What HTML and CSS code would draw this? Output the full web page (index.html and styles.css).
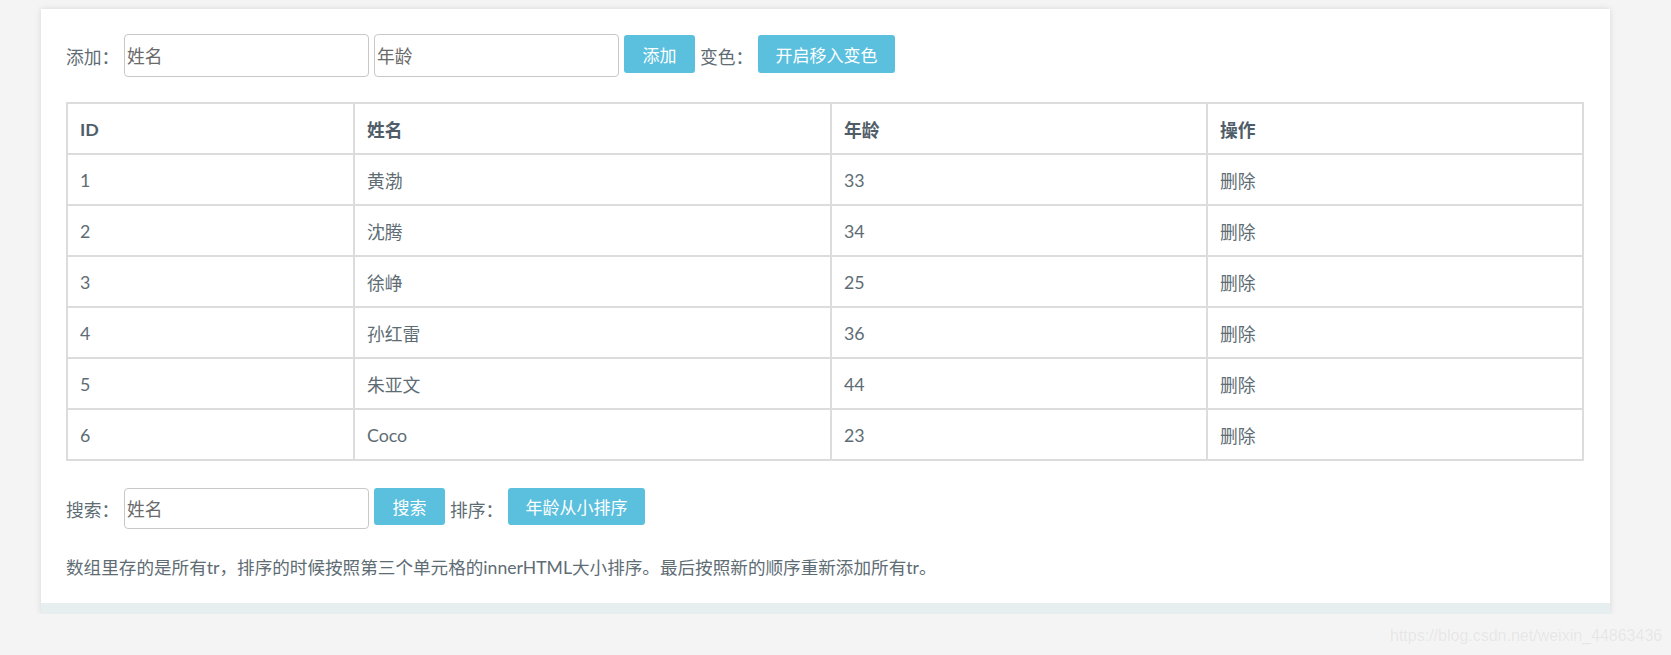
FILE: index.html
```html
<!DOCTYPE html>
<html lang="zh-CN">
<head>
  <meta charset="UTF-8" />
  <title>表格排序</title>
  <link rel="stylesheet" href="styles.css">
</head>
<body>

  <div class="panel">
    <div class="panel-body">

      <!-- 添加 / 变色 -->
      <div class="toolbar">
        <span class="label">添加：</span>
        <input class="field" type="text" placeholder="姓名" />
        <input class="field" type="text" placeholder="年龄" />
        <button class="btn">添加</button>
        <span class="label">变色：</span>
        <button class="btn btn-wide">开启移入变色</button>
      </div>

      <!-- 数据表 -->
      <table class="grid">
        <thead>
          <tr><th class="col-id">ID</th><th class="col-name">姓名</th><th class="col-age">年龄</th><th>操作</th></tr>
        </thead>
        <tbody>
          <tr><td>1</td><td>黄渤</td><td>33</td><td>删除</td></tr>
          <tr><td>2</td><td>沈腾</td><td>34</td><td>删除</td></tr>
          <tr><td>3</td><td>徐峥</td><td>25</td><td>删除</td></tr>
          <tr><td>4</td><td>孙红雷</td><td>36</td><td>删除</td></tr>
          <tr><td>5</td><td>朱亚文</td><td>44</td><td>删除</td></tr>
          <tr><td>6</td><td>Coco</td><td>23</td><td>删除</td></tr>
        </tbody>
      </table>

      <!-- 搜索 / 排序 -->
      <div class="toolbar toolbar-search">
        <span class="label">搜索：</span>
        <input class="field" type="text" placeholder="姓名" />
        <button class="btn">搜索</button>
        <span class="label">排序：</span>
        <button class="btn btn-wide">年龄从小排序</button>
      </div>

      <p class="note">数组里存的是所有tr，排序的时候按照第三个单元格的innerHTML大小排序。最后按照新的顺序重新添加所有tr。</p>
    </div>
    <div class="panel-footer"></div>
  </div>

  <div class="watermark">https://blog.csdn.net/weixin_44863436</div>

</body>
</html>
```

FILE: styles.css
```css
body {
  margin: 0;
  padding: 0;
  background: #f4f4f4;
  color: #5e6c74;
  font-family: "Lato", "Noto Sans CJK SC", sans-serif;
  font-size: 17.8px;
}

.panel {
  margin: 9px 0 0 41px;
  width: 1569px;
  background: #fff;
  box-shadow: 0 0 6px rgba(0, 0, 0, 0.12);
}

.panel-body {
  padding: 25px 26px 23px 25px;
}

.panel-footer {
  height: 11px;
  background: #e6eef0;
}

.toolbar {
  display: flex;
  align-items: center;
  height: 43px;
}

.toolbar .label {
  width: 51px;
  margin-right: 7px;
  white-space: nowrap;
}

.field {
  box-sizing: border-box;
  width: 245px;
  height: 43px;
  margin: 0 5px 0 0;
  padding: 0 2px;
  border: 1px solid #c8c8c8;
  border-radius: 4px;
  font-family: inherit;
  font-size: 17.8px;
  color: #5e6c74;
  outline: none;
}

.field::placeholder {
  color: #6a6a6a;
}

.btn {
  box-sizing: border-box;
  width: 71px;
  height: 38px;
  margin: -3px 5px 0 0;
  padding: 0;
  border: none;
  border-radius: 3px;
  background: #5bc0de;
  color: #fff;
  font-family: inherit;
  font-size: 17px;
  cursor: pointer;
}

.btn-wide {
  width: 137px;
}

.grid {
  width: 100%;
  margin-top: 25px;
  border-collapse: collapse;
  border: 2px solid #dcdcdc;
  table-layout: fixed;
}

.grid th,
.grid td {
  height: 51px;
  padding: 0 12px;
  border: 2px solid #dcdcdc;
  text-align: left;
  box-sizing: border-box;
}

.grid th {
  font-weight: 700;
  color: #4f5d68;
}

.col-id { width: 287px; }
.col-name { width: 477px; }
.col-age { width: 376px; }

.toolbar-search {
  margin-top: 27px;
  height: 41px;
}

.toolbar-search .field {
  height: 41px;
}

.toolbar-search .btn {
  height: 37px;
  margin-top: -4px;
}

.note {
  margin: 27px 0 0;
  font-size: 17.6px;
  line-height: 24px;
}

.watermark {
  position: absolute;
  left: 1390px;
  top: 627px;
  font-family: "Liberation Sans", Arial, sans-serif;
  font-size: 16px;
  color: #e6e6e6;
  text-shadow: 0 0 1px #fff;
}
```
